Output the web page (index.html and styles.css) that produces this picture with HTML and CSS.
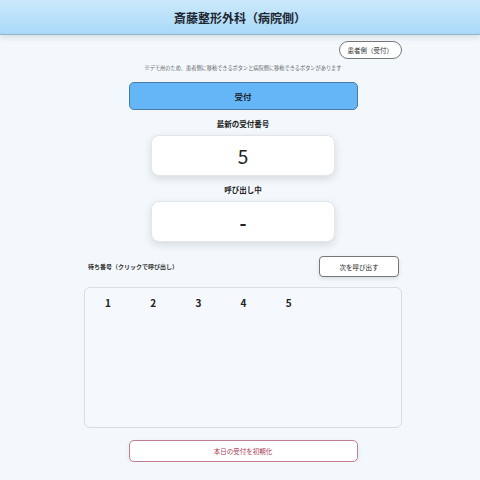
FILE: index.html
```html
<!DOCTYPE html>
<html lang="ja">
<head>
  <meta charset="UTF-8">
  <title>斎藤整形外科（病院側）</title>
  <link rel="stylesheet" href="styles.css">
</head>
<body>

<!-- Header -->
<div class="header">
  <h1>斎藤整形外科（病院側）</h1>
</div>

<div class="content">
  <div class="switch-row">
    <button class="switch-btn">患者側（受付）</button>
  </div>
  <p class="note">※デモ用のため、患者側に移動できるボタンと病院側に移動できるボタンがあります</p>

  <button class="accept-btn">受付</button>

  <div class="label">最新の受付番号</div>
  <div class="number-box">5</div>

  <div class="label">呼び出し中</div>
  <div class="number-box current">-</div>

  <div class="wait-row">
    <span class="wait-label">待ち番号（クリックで呼び出し）</span>
    <button class="next-btn">次を呼び出す</button>
  </div>

  <div class="wait-list">
    <span class="wait-item">1</span>
    <span class="wait-item">2</span>
    <span class="wait-item">3</span>
    <span class="wait-item">4</span>
    <span class="wait-item">5</span>
  </div>

  <button class="reset-btn">本日の受付を初期化</button>
</div>

</body>
</html>
```

FILE: styles.css
```css
* {
  box-sizing: border-box;
}

body {
  font-family: "Noto Sans CJK JP", "Noto Sans", sans-serif;
  margin: 0;
  padding: 0 0 0 6px;
  background-color: #f3f8fc;
  color: #222;
}

/* Header */
.header {
  margin-left: -6px;
  height: 35px;
  background: linear-gradient(to bottom, #cbe9fb, #a9d9f8);
  border-bottom: 1px solid #97b4c9;
  box-shadow: 0 2px 6px rgba(120, 140, 160, 0.25);
  display: flex;
  align-items: center;
  justify-content: center;
}

.header h1 {
  margin: 0;
  font-size: 12px;
  font-weight: bold;
  color: #1c2530;
}

.content {
  width: 318px;
  margin: 0 auto;
}

button {
  font-family: inherit;
  cursor: pointer;
}

.switch-row {
  display: flex;
  justify-content: flex-end;
  margin-top: 6px;
}

.switch-btn {
  height: 18px;
  padding: 0 8px;
  font-size: 6.5px;
  color: #333;
  background: #fff;
  border: 1px solid #777;
  border-radius: 10px;
}

.note {
  margin: 4px 0 0;
  text-align: center;
  font-size: 5.2px;
  color: #666;
  line-height: 10px;
}

.accept-btn {
  display: block;
  width: 229px;
  height: 28px;
  margin: 9px auto 0;
  background-color: #64b6f7;
  border: 1px solid #4a7ca8;
  border-radius: 5px;
  font-size: 8.5px;
  font-weight: bold;
  color: #1c2530;
}

.label {
  margin-top: 8px;
  text-align: center;
  font-size: 7.5px;
  font-weight: bold;
  line-height: 12px;
}

.number-box {
  width: 184px;
  height: 41px;
  margin: 5px auto 0;
  background: #fff;
  border: 1px solid #e2e6ea;
  border-radius: 8px;
  box-shadow: 0 3px 8px rgba(0, 0, 0, 0.12);
  display: flex;
  align-items: center;
  justify-content: center;
  font-size: 19px;
}

.number-box.current {
  font-weight: bold;
}

.wait-row {
  display: flex;
  align-items: center;
  justify-content: space-between;
  margin-top: 14px;
  padding: 0 3px 0 4px;
}

.wait-label {
  font-size: 6px;
  font-weight: bold;
  color: #333;
}

.next-btn {
  width: 80px;
  height: 21px;
  background: #fff;
  border: 1px solid #777;
  border-radius: 4px;
  font-size: 6.5px;
  color: #222;
  box-shadow: 0 2px 4px rgba(0, 0, 0, 0.1);
}

.wait-list {
  height: 141px;
  margin-top: 10px;
  padding: 8px 0 0 20px;
  background: #f5f9fd;
  border: 1px solid #d8dde2;
  border-radius: 6px;
  display: flex;
  align-items: flex-start;
}

.wait-item {
  width: 45.2px;
  font-size: 10px;
  font-weight: bold;
  line-height: 14px;
}

.reset-btn {
  display: block;
  width: 229px;
  height: 22px;
  margin: 12px auto 0;
  background: #fff;
  border: 1px solid #c17f90;
  border-radius: 5px;
  font-size: 6.5px;
  color: #a83a52;
  box-shadow: 0 2px 5px rgba(0, 0, 0, 0.08);
}
```
